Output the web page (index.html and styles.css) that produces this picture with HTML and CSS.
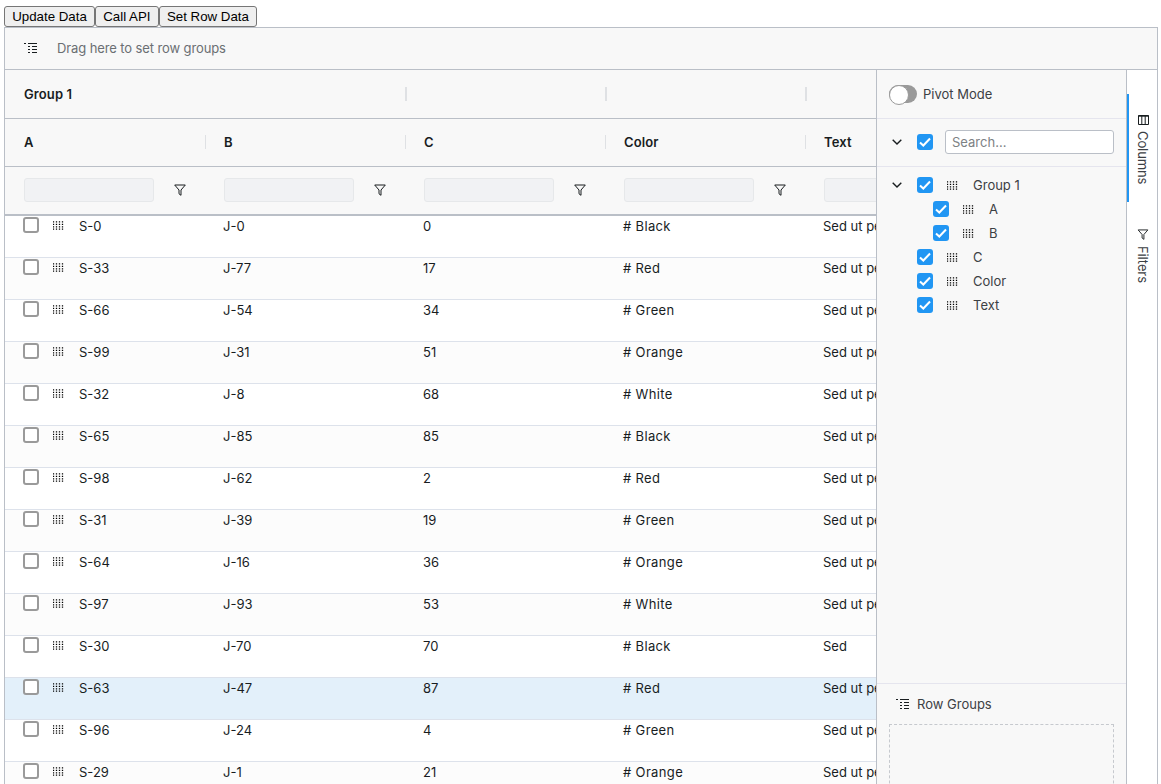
FILE: index.html
```html
<!DOCTYPE html>
<html lang="en">
<head>
    <meta charset="UTF-8">
    <title>Grid</title>
    <link rel="stylesheet" href="styles.css">
</head>
<body>
    <svg class="sprite" width="0" height="0">
        <symbol id="grip" viewBox="0 0 11 8.500">
            <path d="M.5 0v1.200M3.500 0v1.200M6.500 0v1.200M9.500 0v1.200M.5 2.500v1.200M3.500 2.500v1.200M6.500 2.500v1.200M9.500 2.500v1.200M.5 5v1.200M3.500 5v1.200M6.500 5v1.200M9.500 5v1.200M.5 7.300v1.200M3.500 7.300v1.200M6.500 7.300v1.200M9.500 7.300v1.200" stroke="#000" stroke-width="1.300" fill="none"/>
        </symbol>
        <symbol id="filter" viewBox="0 0 12 12">
            <path d="M.7 1h10.600L7 6v5.300L5 9.800V6z" stroke="#181d1f" stroke-width="1" fill="none" stroke-linejoin="miter"/>
        </symbol>
        <symbol id="groups" viewBox="0 0 13 10">
            <path d="M0 .5h2M4 .5h9M4 3.500h2M8 3.500h5M4 6.500h2M8 6.500h5M4 9.500h2M8 9.500h5" stroke="#181d1f" stroke-width="1" fill="none"/>
        </symbol>
        <symbol id="chevron" viewBox="0 0 10 6">
            <path d="M.7.7 5 5 9.300.7" stroke="#181d1f" stroke-width="1.400" fill="none"/>
        </symbol>
        <symbol id="tick" viewBox="0 0 16 16">
            <path d="M3 8.500l3.300 3L13 4.500" stroke="#fff" stroke-width="2" fill="none"/>
        </symbol>
    </svg>

    <div class="toolbar">
        <button>Update Data</button><button>Call API</button><button>Set Row Data</button>
    </div>

    <div class="grid">
        <div class="group-bar">
            <svg class="icon-groups"><use href="#groups"/></svg>
            <span>Drag here to set row groups</span>
        </div>

        <div class="grid-body">
            <div class="main">
                <div class="header">
                    <div class="header-row group-row">
                        <div class="hcell span-2 bold">Group 1</div>
                        <div class="hcell handle-thick"></div>
                        <div class="hcell handle-thick"></div>
                        <div class="hcell handle-thick"></div>
                    </div>
                    <div class="header-row title-row">
                        <div class="hcell bold">A</div>
                        <div class="hcell handle bold">B</div>
                        <div class="hcell handle bold">C</div>
                        <div class="hcell handle bold">Color</div>
                        <div class="hcell handle bold">Text</div>
                    </div>
                    <div class="header-row filter-row">
                        <div class="hcell"><div class="filter-input"></div><svg class="icon-filter"><use href="#filter"/></svg></div>
                        <div class="hcell"><div class="filter-input"></div><svg class="icon-filter"><use href="#filter"/></svg></div>
                        <div class="hcell"><div class="filter-input"></div><svg class="icon-filter"><use href="#filter"/></svg></div>
                        <div class="hcell"><div class="filter-input"></div><svg class="icon-filter"><use href="#filter"/></svg></div>
                        <div class="hcell"><div class="filter-input"></div></div>
                    </div>
                </div>

                <div class="rows">
                    <div class="row"><div class="cell first"><span class="check"></span><svg class="icon-grip"><use href="#grip"/></svg>S-0</div><div class="cell">J-0</div><div class="cell">0</div><div class="cell color"># Black</div><div class="cell">Sed ut perspiciatis</div></div>
                    <div class="row odd"><div class="cell first"><span class="check"></span><svg class="icon-grip"><use href="#grip"/></svg>S-33</div><div class="cell">J-77</div><div class="cell">17</div><div class="cell color"># Red</div><div class="cell">Sed ut perspiciatis</div></div>
                    <div class="row"><div class="cell first"><span class="check"></span><svg class="icon-grip"><use href="#grip"/></svg>S-66</div><div class="cell">J-54</div><div class="cell">34</div><div class="cell color"># Green</div><div class="cell">Sed ut perspiciatis</div></div>
                    <div class="row odd"><div class="cell first"><span class="check"></span><svg class="icon-grip"><use href="#grip"/></svg>S-99</div><div class="cell">J-31</div><div class="cell">51</div><div class="cell color"># Orange</div><div class="cell">Sed ut perspiciatis</div></div>
                    <div class="row"><div class="cell first"><span class="check"></span><svg class="icon-grip"><use href="#grip"/></svg>S-32</div><div class="cell">J-8</div><div class="cell">68</div><div class="cell color"># White</div><div class="cell">Sed ut perspiciatis</div></div>
                    <div class="row odd"><div class="cell first"><span class="check"></span><svg class="icon-grip"><use href="#grip"/></svg>S-65</div><div class="cell">J-85</div><div class="cell">85</div><div class="cell color"># Black</div><div class="cell">Sed ut perspiciatis</div></div>
                    <div class="row"><div class="cell first"><span class="check"></span><svg class="icon-grip"><use href="#grip"/></svg>S-98</div><div class="cell">J-62</div><div class="cell">2</div><div class="cell color"># Red</div><div class="cell">Sed ut perspiciatis</div></div>
                    <div class="row odd"><div class="cell first"><span class="check"></span><svg class="icon-grip"><use href="#grip"/></svg>S-31</div><div class="cell">J-39</div><div class="cell">19</div><div class="cell color"># Green</div><div class="cell">Sed ut perspiciatis</div></div>
                    <div class="row"><div class="cell first"><span class="check"></span><svg class="icon-grip"><use href="#grip"/></svg>S-64</div><div class="cell">J-16</div><div class="cell">36</div><div class="cell color"># Orange</div><div class="cell">Sed ut perspiciatis</div></div>
                    <div class="row odd"><div class="cell first"><span class="check"></span><svg class="icon-grip"><use href="#grip"/></svg>S-97</div><div class="cell">J-93</div><div class="cell">53</div><div class="cell color"># White</div><div class="cell">Sed ut perspiciatis</div></div>
                    <div class="row"><div class="cell first"><span class="check"></span><svg class="icon-grip"><use href="#grip"/></svg>S-30</div><div class="cell">J-70</div><div class="cell">70</div><div class="cell color"># Black</div><div class="cell">Sed</div></div>
                    <div class="row selected"><div class="cell first"><span class="check"></span><svg class="icon-grip"><use href="#grip"/></svg>S-63</div><div class="cell">J-47</div><div class="cell">87</div><div class="cell color"># Red</div><div class="cell">Sed ut perspiciatis</div></div>
                    <div class="row"><div class="cell first"><span class="check"></span><svg class="icon-grip"><use href="#grip"/></svg>S-96</div><div class="cell">J-24</div><div class="cell">4</div><div class="cell color"># Green</div><div class="cell">Sed ut perspiciatis</div></div>
                    <div class="row odd"><div class="cell first"><span class="check"></span><svg class="icon-grip"><use href="#grip"/></svg>S-29</div><div class="cell">J-1</div><div class="cell">21</div><div class="cell color"># Orange</div><div class="cell">Sed ut perspiciatis</div></div>
                </div>
            </div>

            <div class="panel">
                <div class="pivot">
                    <span class="toggle"></span>
                    <span>Pivot Mode</span>
                </div>
                <div class="select-bar">
                    <svg class="icon-chevron"><use href="#chevron"/></svg>
                    <span class="check on"><svg><use href="#tick"/></svg></span>
                    <div class="search">Search...</div>
                </div>
                <div class="col-list">
                    <div class="col-item">
                        <svg class="icon-chevron"><use href="#chevron"/></svg>
                        <span class="check on"><svg><use href="#tick"/></svg></span>
                        <svg class="icon-grip"><use href="#grip"/></svg>Group 1
                    </div>
                    <div class="col-item child"><span class="check on"><svg><use href="#tick"/></svg></span><svg class="icon-grip"><use href="#grip"/></svg>A</div>
                    <div class="col-item child"><span class="check on"><svg><use href="#tick"/></svg></span><svg class="icon-grip"><use href="#grip"/></svg>B</div>
                    <div class="col-item leaf"><span class="check on"><svg><use href="#tick"/></svg></span><svg class="icon-grip"><use href="#grip"/></svg>C</div>
                    <div class="col-item leaf"><span class="check on"><svg><use href="#tick"/></svg></span><svg class="icon-grip"><use href="#grip"/></svg>Color</div>
                    <div class="col-item leaf"><span class="check on"><svg><use href="#tick"/></svg></span><svg class="icon-grip"><use href="#grip"/></svg>Text</div>
                </div>
                <div class="drop-section">
                    <div class="drop-title"><svg class="icon-groups"><use href="#groups"/></svg>Row Groups</div>
                    <div class="drop-box"></div>
                </div>
            </div>

            <div class="side-bar">
                <div class="side-tab active">
                    <svg class="tab-icon" viewBox="0 0 11 10"><path d="M.5 .5h10v9H.5zM0 1.200h11M3.800 1v8M7.200 1v8" stroke="#181d1f" stroke-width="1" fill="none"/></svg>
                    <span>Columns</span>
                </div>
                <div class="side-tab">
                    <svg class="tab-icon filter-tab-icon"><use href="#filter"/></svg>
                    <span>Filters</span>
                </div>
            </div>
        </div>
    </div>
</body>
</html>
```

FILE: styles.css
```css
* {
    box-sizing: border-box;
}

html, body {
    height: 100%;
    overflow: hidden;
}

body {
    margin: 0;
    padding: 6px 3px 0 4px;
    font-family: Inter, 'Liberation Sans', sans-serif;
    font-size: 13px;
    color: #181d1f;
    background: #fff;
}

.sprite {
    display: block;
}

.toolbar {
    display: flex;
    height: 21px;
}

.toolbar button {
    height: 21px;
    padding: 0 7.200px;
    background: #efefef;
    border: 1px solid #767676;
    border-radius: 3px;
    font-family: 'Liberation Sans', sans-serif;
    font-size: 13.300px;
    color: #000;
}

.grid {
    border: 1px solid #babfc7;
    height: 800px;
    background: #fff;
}

.group-bar {
    display: flex;
    align-items: center;
    height: 42px;
    padding-left: 19px;
    padding-bottom: 1px;
    background: #f8f8f8;
    border-bottom: 1px solid #babfc7;
    color: #6b6f73;
    letter-spacing: -0.110px;
}

.icon-groups {
    width: 13px;
    height: 10px;
    margin-right: 20px;
    flex: none;
}

.grid-body {
    display: flex;
    height: 757px;
}

.main {
    width: 871px;
    flex: none;
    overflow: hidden;
}

.header {
    background: #f8f8f8;
    border-bottom: 2px solid #babfc7;
}

.header-row {
    display: flex;
    height: 48px;
    border-bottom: 1px solid #babfc7;
}

.header-row.group-row {
    height: 49px;
}

.header-row.title-row {
    padding-bottom: 1px;
}

.header-row.filter-row {
    height: 47px;
    padding-bottom: 1px;
    border-bottom: none;
}

.hcell {
    display: flex;
    flex: none;
    align-items: center;
    position: relative;
    width: 200px;
    padding-left: 19px;
}

.bold {
    font-weight: 600;
    font-size: 13px;
    letter-spacing: 0.100px;
}

.span-2 {
    width: 400px;
}

.handle::before, .handle-thick::before {
    content: '';
    position: absolute;
    left: 0;
    top: 16px;
    height: 14px;
    width: 1px;
    background: #dfe1e4;
}

.handle-thick::before {
    top: 17px;
    width: 2px;
}

.filter-input {
    width: 130px;
    height: 24px;
    background: #f1f2f4;
    border: 1px solid #e6e8ea;
    border-radius: 3px;
    flex: none;
}

.icon-filter {
    width: 12px;
    height: 12px;
    margin-left: 20px;
    flex: none;
}

.row {
    display: flex;
    height: 42px;
    background: #fff;
    border-bottom: 1px solid #dde2eb;
}

.row.odd {
    background: #fcfcfc;
}

.row.selected {
    background: #e3f0fa;
}

.cell {
    flex: none;
    width: 200px;
    padding-left: 18px;
    line-height: 20px;
    white-space: nowrap;
    overflow: hidden;
}

.cell.first {
    display: flex;
    align-items: flex-start;
}

.cell.color {
    letter-spacing: 0.350px;
}

.check {
    display: inline-block;
    flex: none;
    width: 16px;
    height: 16px;
    background: #fff;
    border: 2px solid #9a9a9a;
    border-radius: 3px;
    margin-top: 1px;
}

.check.on {
    background: #2196f3;
    border: none;
    margin-top: 0;
}

.check svg {
    display: block;
    width: 16px;
    height: 16px;
}

.icon-grip {
    width: 11px;
    height: 9px;
    flex: none;
    margin: 5px 15px 0 14px;
}

.panel {
    display: flex;
    flex-direction: column;
    flex: none;
    width: 251px;
    background: #f8f8f8;
    border-left: 1px solid #babfc7;
    border-right: 1px solid #babfc7;
}

.pivot {
    display: flex;
    align-items: center;
    gap: 6px;
    height: 49px;
    padding-left: 12px;
    border-bottom: 1px solid #e5e5ee;
    color: #3c4044;
}

.toggle {
    position: relative;
    width: 28px;
    height: 18px;
    background: #9a9a9a;
    border-radius: 9px;
}

.toggle::after {
    content: '';
    position: absolute;
    left: 0;
    top: 0;
    width: 18px;
    height: 18px;
    background: #fff;
    border: 1px solid #9a9a9a;
    border-radius: 50%;
}

.select-bar {
    display: flex;
    align-items: center;
    height: 48px;
    padding-left: 15px;
    padding-bottom: 1px;
    border-bottom: 1px solid #e5e5ee;
}

.icon-chevron {
    width: 10px;
    height: 6px;
    flex: none;
    margin-right: 15px;
}

.search {
    width: 169px;
    height: 24px;
    margin-left: 12px;
    padding-left: 6px;
    line-height: 22px;
    background: #fff;
    border: 1px solid #babfc7;
    border-radius: 3px;
    color: #7d8184;
}

.col-list {
    flex: 1;
    padding-top: 6px;
}

.col-item {
    display: flex;
    align-items: center;
    height: 24px;
    padding-left: 15px;
    color: #3c4044;
}

.col-item .icon-grip {
    margin: 0 15px 0 14px;
}

.col-item.child {
    padding-left: 56px;
}

.col-item.leaf {
    padding-left: 40px;
}

.drop-section {
    height: 144px;
    flex: none;
    border-top: 1px solid #e5e5ee;
    padding: 0 12px;
}

.drop-title {
    display: flex;
    align-items: center;
    height: 40px;
    padding-left: 7px;
    color: #3c4044;
}

.drop-title .icon-groups {
    margin-right: 8px;
}

.drop-box {
    height: 80px;
    border: 1px dashed #c6c9ce;
}

.side-bar {
    flex: none;
    width: 30px;
    padding-top: 24px;
}

.side-tab {
    display: flex;
    flex-direction: column;
    align-items: center;
    height: 108px;
    padding-top: 21px;
    margin-bottom: 6px;
    border-left: 2px solid transparent;
}

.side-tab.active {
    border-left-color: #2196f3;
}

.side-tab span {
    writing-mode: vertical-lr;
    margin-top: 6px;
    color: #3c4044;
    letter-spacing: -0.100px;
}

.tab-icon {
    width: 11px;
    height: 10px;
    flex: none;
}

.filter-tab-icon {
    width: 12px;
    height: 11px;
}
```
